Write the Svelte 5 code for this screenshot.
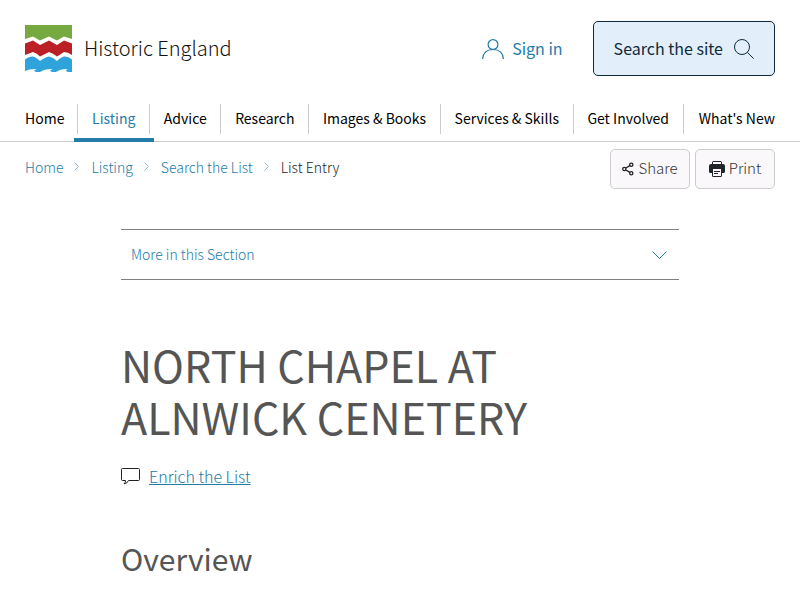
<script>
  const nav = ['Home', 'Listing', 'Advice', 'Research', 'Images & Books', 'Services & Skills', 'Get Involved', "What's New"];
  const active = 'Listing';
  const crumbs = ['Home', 'Listing', 'Search the List'];
</script>

<header>
  <div class="top">
    <a class="logo" href="/">
      <svg width="47" height="47" viewBox="0 0 47 47" aria-hidden="true">
        <path fill="#76a940" d="M0 0H47V14L39 11.500L32 15.500L24 11.500L15 15.500L8 11.500L0 14Z" />
        <path fill="#ba2025" d="M0 18.500L8 15.500L15 20L24 15.500L32 20L39 15.500L47 18.500V30Q43 27 39 27L32 31.500Q28 28 24 27L15 31.500Q12 28 8 27L0 30Z" />
        <path fill="#2fa3dc" d="M0 34.500Q4 31 8 31.500Q11 32 15 36Q20 32 24 31.500Q28 32 32 36Q36 32 39 31.500Q43 31 47 34.500V47H43Q39 45.500 43 44Q36 43.500 31 47H27Q23 45.500 28 44Q20 43.500 15 47H11Q7 45.500 12 44Q5 43.500 0 46Z" />
      </svg>
      <span>Historic England</span>
    </a>
    <div class="tools">
      <a class="signin" href="/signin">
        <svg width="22" height="20" viewBox="0 0 22 20" fill="none" stroke="currentColor" stroke-width="1.200" aria-hidden="true">
          <circle cx="11" cy="5.500" r="4.900" />
          <path d="M.6 20C1 14 5 10.500 11 10.500S21 14 21.400 20" />
        </svg>
        <span>Sign in</span>
      </a>
      <button class="search" type="button">
        <span>Search the site</span>
        <svg width="20" height="20" viewBox="0 0 20 20" fill="none" stroke="currentColor" aria-hidden="true">
          <circle cx="8" cy="8" r="7.500" />
          <path d="M13.300 13.300L19.700 19.700" />
        </svg>
      </button>
    </div>
  </div>
  <nav aria-label="Main">
    <ul>
      {#each nav as item}
        <li class:active={item === active}><a href="/">{item}</a></li>
      {/each}
    </ul>
  </nav>
</header>

<div class="bar">
  <nav aria-label="Breadcrumb">
    <ol class="crumbs">
      {#each crumbs as crumb}
        <li>
          <a href="/">{crumb}</a>
          <svg width="5" height="9" viewBox="0 0 5 9" fill="none" stroke="#8fbdd4" aria-hidden="true"><path d="M.5 .5L4.500 4.500L.5 8.500" /></svg>
        </li>
      {/each}
      <li aria-current="page">List Entry</li>
    </ol>
  </nav>
  <div class="actions">
    <button type="button">
      <svg width="12" height="14" viewBox="0 0 12 14" fill="none" stroke="#222" stroke-width="1.300" aria-hidden="true">
        <circle cx="2.300" cy="7" r="1.600" />
        <circle cx="9.300" cy="2.700" r="1.600" />
        <circle cx="9.300" cy="11.300" r="1.600" />
        <path d="M3.800 6L7.900 3.600M3.800 8L7.900 10.400" />
      </svg>
      <span>Share</span>
    </button>
    <button type="button">
      <svg width="16" height="16" viewBox="0 0 16 16" fill="#212529" aria-hidden="true">
        <path d="M3 3V1.500Q3 0 4.500 0H11.500Q13 0 13 1.500V3H12V1H4V3Z" />
        <path fill-rule="evenodd" d="M2 3H14Q16 3 16 5V10.500Q16 12 14.500 12H13V14.500Q13 16 11.500 16H4.500Q3 16 3 14.500V12H1.500Q0 12 0 10.500V5Q0 3 2 3ZM4 8V15H12V8Z" />
        <path d="M5 10H11V11H5ZM5 12H9V13H5Z" />
      </svg>
      <span>Print</span>
    </button>
  </div>
</div>

<main>
  <button class="section" type="button" aria-expanded="false">
    <span>More in this Section</span>
    <svg width="15" height="8" viewBox="0 0 15 8" fill="none" stroke="#237ba8" aria-hidden="true"><path d="M.5 .5L7.500 7.500L14.500 .5" /></svg>
  </button>
  <h1>NORTH CHAPEL AT ALNWICK CENETERY</h1>
  <p class="enrich">
    <svg width="19" height="17" viewBox="0 0 19 17" fill="none" stroke="#222" aria-hidden="true"><path d="M1.500 .5H17.500Q18.500 .5 18.500 1.500V11.500Q18.500 12.500 17.500 12.500H7.500Q6.500 15.500 3 15.800Q4.700 14.500 4.500 12.500H1.500Q.5 12.500 .5 11.500V1.500Q.5 .5 1.500 .5Z" /></svg>
    <a href="/">Enrich the List</a>
  </p>
  <h2>Overview</h2>
</main>

<style>
  :global(body) {
    margin: 0;
    background: #fff;
    color: #222;
    font-family: 'Noto Sans CJK JP', 'Noto Sans', sans-serif;
    font-size: 16px;
    line-height: 24px;
    font-weight: 300;
  }
  a { color: #237ba8; text-decoration: none; }
  button { font: inherit; cursor: pointer; }
  button span, .top span { padding-bottom: 2px; }
  svg { display: block; flex: none; }
  ul, ol { list-style: none; margin: 0; padding: 0; }
  header { border-bottom: 1px solid #ccc; }
  .top {
    display: flex;
    justify-content: space-between;
    align-items: center;
    padding: 21px 25px 28px;
  }
  .logo {
    display: flex;
    align-items: center;
    gap: 12px;
    color: #111;
    font-size: 20px;
  }
  .tools { display: flex; align-items: center; gap: 30px; font-weight: 400; }
  .signin { display: flex; align-items: center; gap: 8px; }
  .search {
    display: flex;
    align-items: center;
    gap: 11px;
    padding: 0 20px;
    height: 55px;
    border: 1px solid #0f2a3a;
    border-radius: 5px;
    background: #e2eefa;
    color: #0f2a3a;
  }
  header nav { padding: 0 25px; }
  header ul { display: flex; justify-content: space-between; }
  header li {
    flex: 1 1 auto;
    text-align: center;
    position: relative;
    height: 30px;
    margin-bottom: 7px;
    border-right: 1px solid #ccc;
    font-size: 14px;
    line-height: 28px;
    font-weight: 400;
    white-space: nowrap;
  }
  header li:first-child { flex-grow: 0; padding-right: 13px; }
  header li:last-child { flex-grow: 0; padding-left: 15px; border: 0; }
  header li a { color: #000; }
  header li.active a { color: #237ba8; }
  header li.active::after {
    content: '';
    position: absolute;
    left: -4px;
    right: -5px;
    bottom: -8px;
    height: 4px;
    background: #237ba8;
  }
  .bar {
    display: flex;
    justify-content: space-between;
    align-items: flex-start;
    padding: 7px 25px 0;
  }
  .crumbs { display: flex; padding-top: 6px; font-size: 14px; }
  .crumbs li { display: flex; }
  .crumbs svg { margin: 7px 12px 0 11px; }
  .actions { display: flex; gap: 5px; }
  .actions button {
    display: flex;
    justify-content: center;
    align-items: center;
    gap: 4px;
    width: 80px;
    height: 40px;
    padding: 0;
    border: 1px solid #ccc;
    border-radius: 5px;
    background: #faf8fa;
    color: #333;
    font-size: 15px;
  }
  main { margin: 40px 121px 0; }
  .section {
    display: flex;
    justify-content: space-between;
    align-items: center;
    width: 100%;
    height: 51px;
    padding: 0 12px 0 10px;
    border: solid #808080;
    border-width: 1px 0;
    background: none;
    color: #237ba8;
    font-size: 14px;
  }
  h1, h2 { color: #555; font-weight: 400; }
  h1 { margin: 58px 0 0; font-size: 43px; line-height: 52px; }
  .enrich { display: flex; align-items: center; gap: 9px; margin: 22px 0 0; }
  .enrich a { text-decoration: underline; }
  h2 { margin: 50px 0 0; font-size: 30px; line-height: 40px; }
</style>
